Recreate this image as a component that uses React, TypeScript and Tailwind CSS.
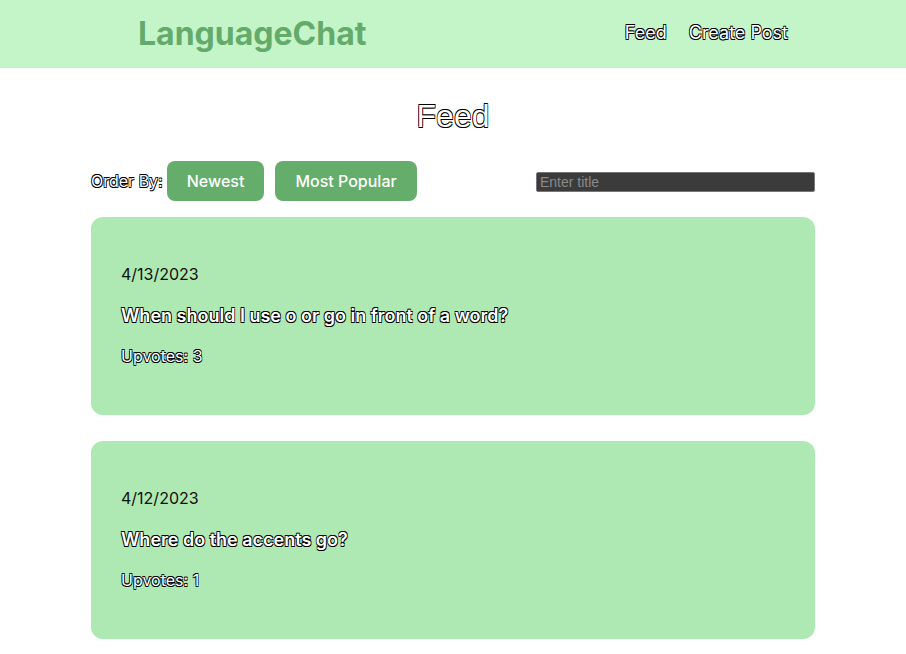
import React, { useState } from 'react';

const outline =
  '[text-shadow:-0.7px_-0.7px_0_#000,0.7px_-0.7px_0_#000,-0.7px_0.7px_0_#000,0.7px_0.7px_0_#000] text-white';

const posts = [
  { id: 1, date: '4/13/2023', title: 'When should I use o or go in front of a word?', upvotes: 3 },
  { id: 2, date: '4/12/2023', title: 'Where do the accents go?', upvotes: 1 },
];

const App: React.FC = () => {
  const [search, setSearch] = useState('');

  return (
    <div className="min-h-screen bg-white font-['Inter',sans-serif]">
      {/* Header */}
      <header className="flex h-[68px] items-center justify-between bg-[#c4f5c9] pl-[138px] pr-[118px]">
        <h1 className="text-[32px] font-bold text-[#64aa6a]">LanguageChat</h1>
        <nav className={`flex gap-[22px] pb-1 text-[18px] ${outline}`}>
          <span>Feed</span>
          <span>Create Post</span>
        </nav>
      </header>

      <main className="mx-auto w-[724px]">
        <h2 className={`mt-[32px] text-center font-['Liberation_Sans',sans-serif] text-[32px] leading-none ${outline}`}>
          Feed
        </h2>

        {/* Order row */}
        <div className="mt-[29px] flex items-center justify-between">
          <div className="flex items-center">
            <span className={`mr-[4px] text-[16px] ${outline}`}>Order By:</span>
            <button className="h-10 rounded-lg bg-[#65ad6b] px-5 text-[16px] font-medium text-white">Newest</button>
            <button className="ml-[11px] h-10 rounded-lg bg-[#65ad6b] px-5 text-[16px] font-medium text-white">
              Most Popular
            </button>
          </div>
          <input
            value={search}
            onChange={(e) => setSearch(e.target.value)}
            placeholder="Enter title"
            className="mt-[2px] h-5 w-[279px] rounded-[2px] border border-[#777] bg-[#3b3b3b] px-[3px] font-['Liberation_Sans',sans-serif] text-[14px] text-white placeholder:text-[#8a8a8a]"
          />
        </div>

        {/* Posts */}
        <div className="mt-4 flex flex-col gap-[26px] pb-8">
          {posts.map((post) => (
            <div key={post.id} className="h-[198px] rounded-xl bg-[#aee8b2] px-[30px] pt-[45px]">
              <p className="text-[16px] leading-6 text-[#111]">{post.date}</p>
              <p className={`mt-[17px] text-[18px] font-semibold leading-[25px] ${outline}`}>{post.title}</p>
              <p className={`mt-4 text-[16px] leading-6 ${outline}`}>Upvotes: {post.upvotes}</p>
            </div>
          ))}
        </div>
      </main>
    </div>
  );
};

export default App;
